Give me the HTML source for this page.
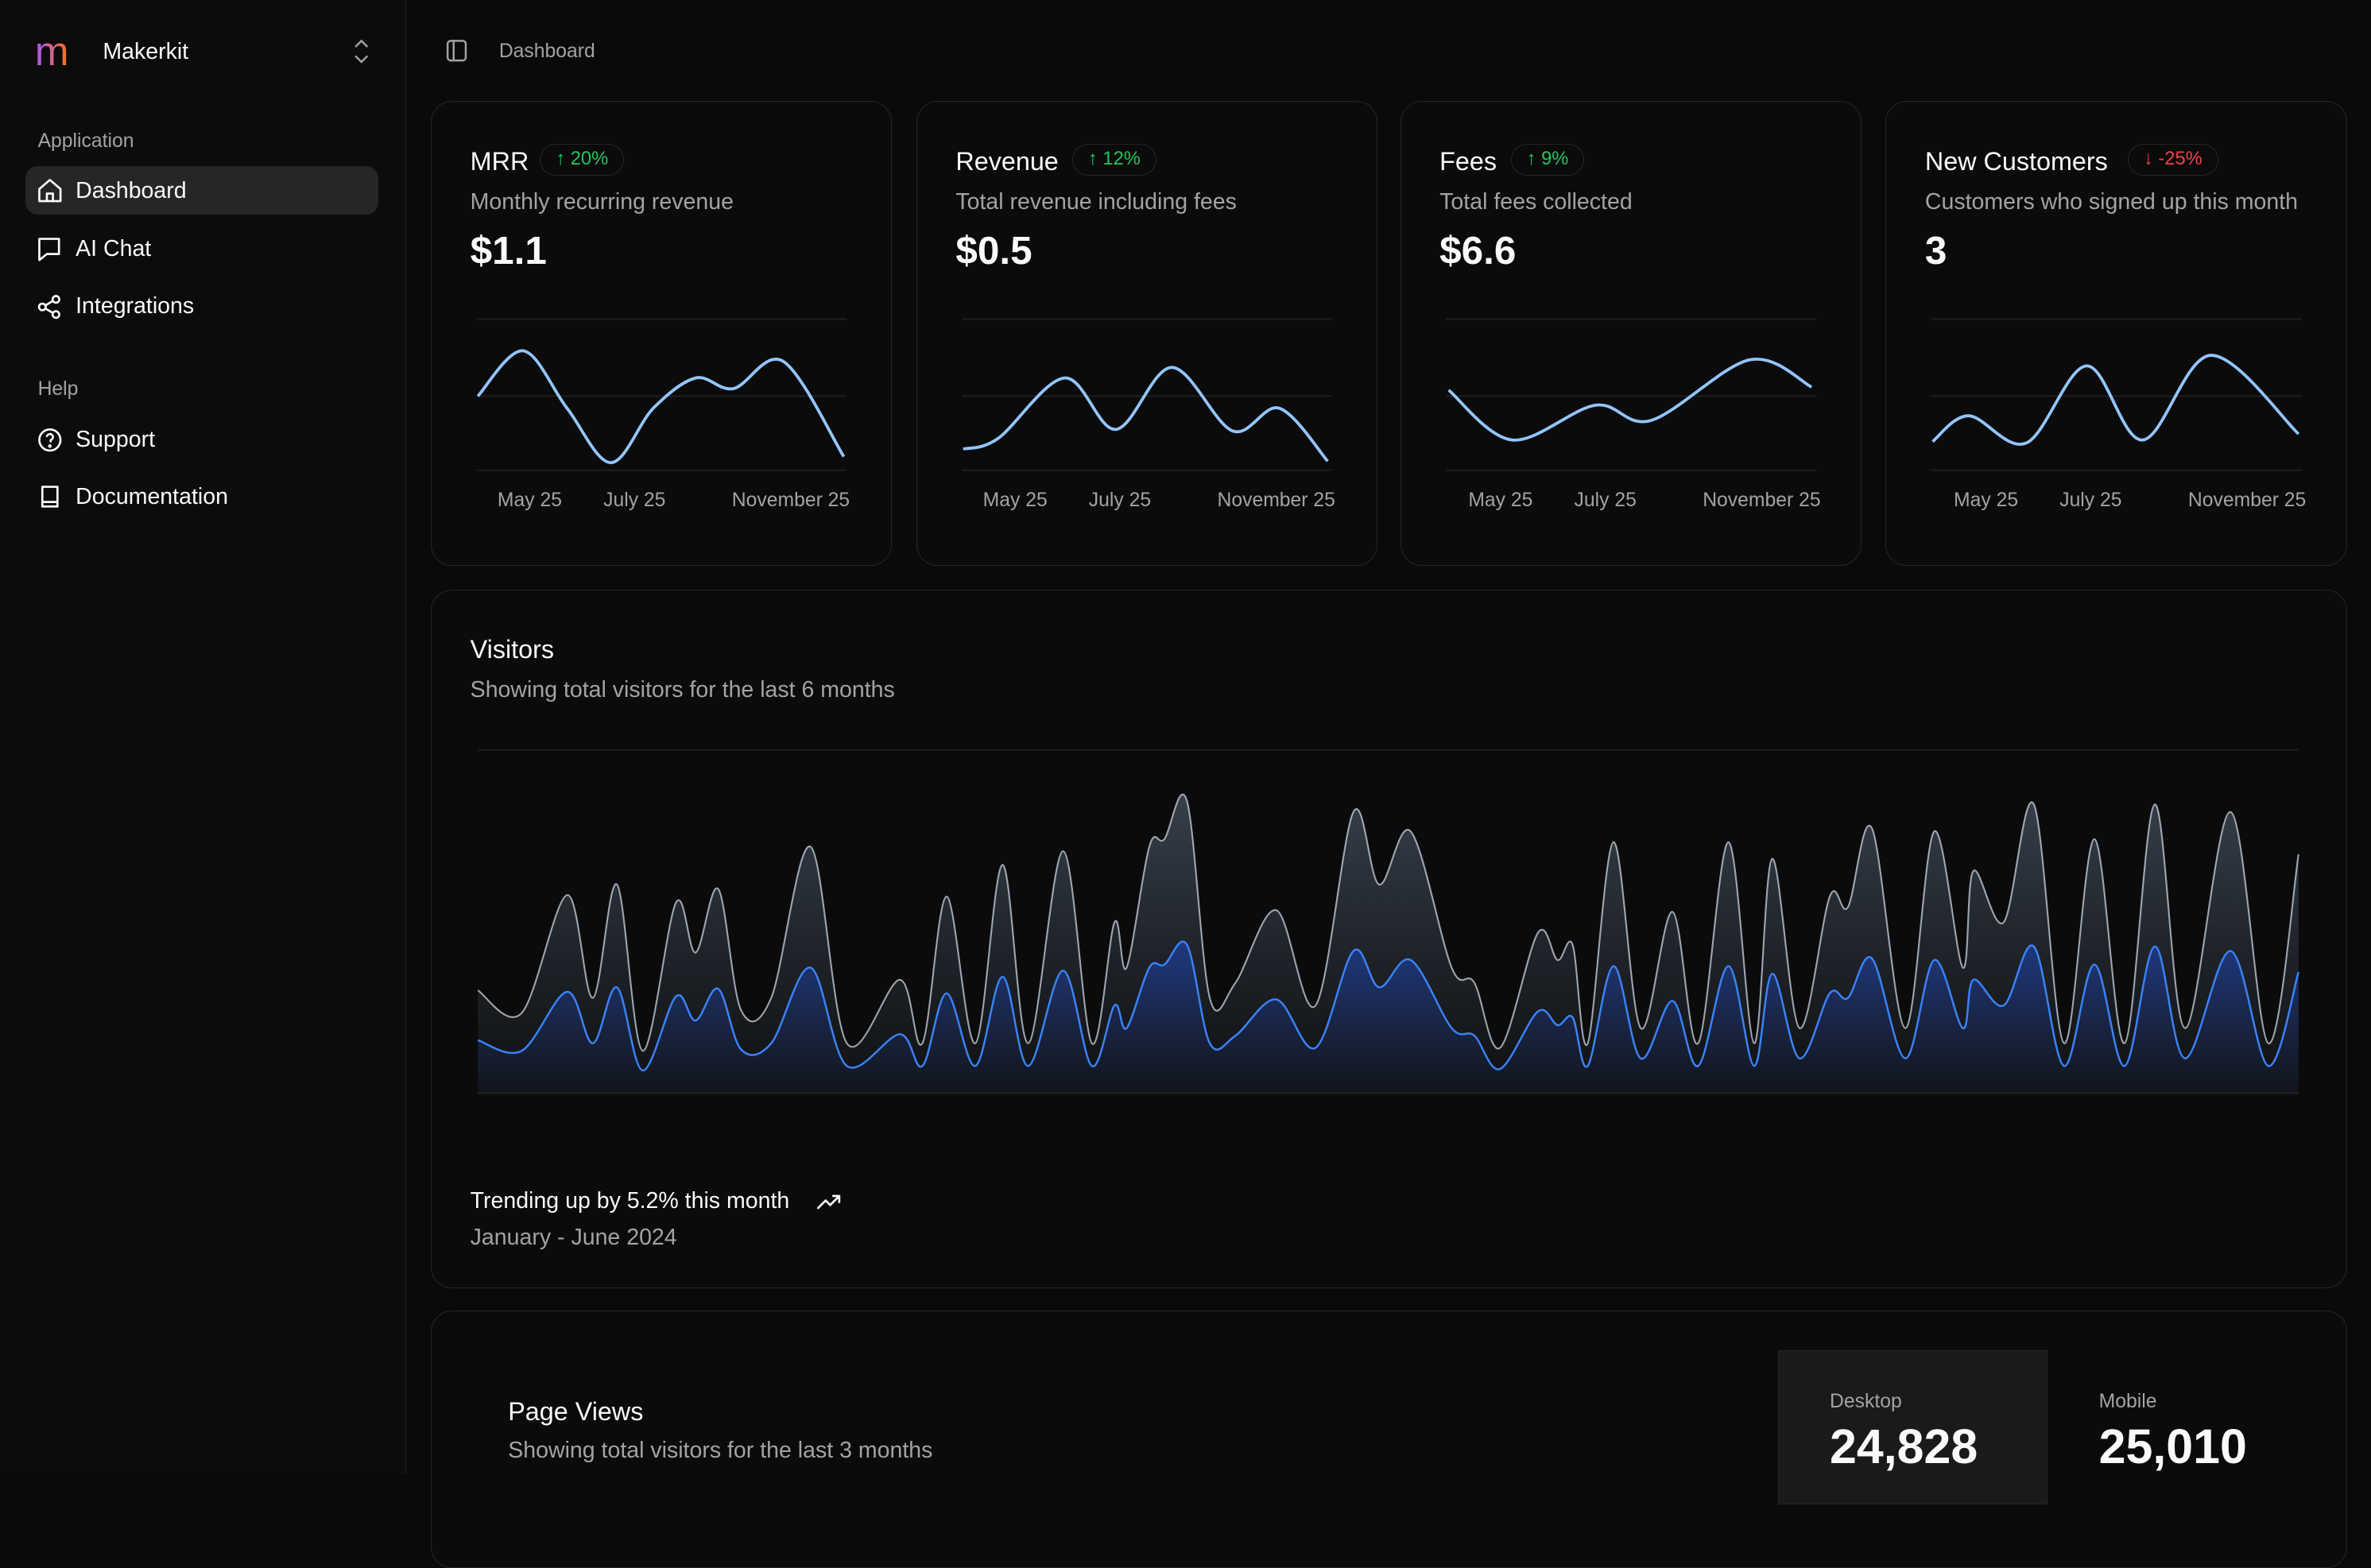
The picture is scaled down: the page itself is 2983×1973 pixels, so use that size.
<!DOCTYPE html>
<html><head><meta charset="utf-8">
<style>
html,body{margin:0;padding:0;background:#0a0a0a;width:2983px;height:1947px;overflow:hidden}
#r{position:absolute;left:0;top:0;width:1568px;height:1024px;zoom:1.9025;font-family:"Liberation Sans",sans-serif;color:#fafafa}
.a{position:absolute;white-space:nowrap}
.side{position:absolute;left:0;top:0;width:268px;height:975px;background:#0c0c0c;border-right:1px solid #222}
.card{position:absolute;border:1px solid #262626;border-radius:14px;background:#0b0b0b;box-sizing:border-box}
.t{font-size:17px;color:#fafafa}
.s{font-size:15px;color:#a3a3a3}
.v{font-size:26px;font-weight:bold}
.badge{position:absolute;height:21px;border:1px solid #262626;border-radius:11px;font-size:12.5px;line-height:19px;padding:0 10px;box-sizing:border-box}
.lab{font-size:13px;color:#a3a3a3}
.nav{font-size:15px;color:#fafafa}
svg{position:absolute;left:0;top:0;overflow:visible}
</style></head><body><div id="r">
<div class="side"></div>
<div class="a" style="left:23px;top:22px;font-size:27px;line-height:24px;background:linear-gradient(90deg,#a855f7,#f97316);-webkit-background-clip:text;color:transparent">m</div>
<div class="a" style="left:68px;top:26px;font-size:15px">Makerkit</div>
<div class="a lab" style="left:25px;top:86px">Application</div>
<div class="a" style="left:17px;top:110px;width:233px;height:32px;background:#262626;border-radius:8px"></div>
<div class="a nav" style="left:50px;top:118px">Dashboard</div>
<div class="a nav" style="left:50px;top:156px">AI Chat</div>
<div class="a nav" style="left:50px;top:194px">Integrations</div>
<div class="a lab" style="left:25px;top:250px">Help</div>
<div class="a nav" style="left:50px;top:282px">Support</div>
<div class="a nav" style="left:50px;top:320px">Documentation</div>
<div class="a lab" style="left:330px;top:27px">Dashboard</div>

<div class="card" style="left:285px;top:67px;width:305px;height:307px"></div>
<div class="card" style="left:606px;top:67px;width:305px;height:307px"></div>
<div class="card" style="left:926px;top:67px;width:305px;height:307px"></div>
<div class="card" style="left:1247px;top:67px;width:305px;height:307px"></div>
<div class="card" style="left:285px;top:390px;width:1267px;height:462px"></div>
<div class="card" style="left:285px;top:867px;width:1267px;height:170px"></div>

<div class="a t" style="left:311px;top:97px">MRR</div>
<div class="badge" style="left:357px;top:95px;color:#22c55e">↑ 20%</div>
<div class="a s" style="left:311px;top:125px">Monthly recurring revenue</div>
<div class="a v" style="left:311px;top:151px">$1.1</div>
<div class="a t" style="left:632px;top:97px">Revenue</div>
<div class="badge" style="left:709px;top:95px;color:#22c55e">↑ 12%</div>
<div class="a s" style="left:632px;top:125px">Total revenue including fees</div>
<div class="a v" style="left:632px;top:151px">$0.5</div>
<div class="a t" style="left:952px;top:97px">Fees</div>
<div class="badge" style="left:999px;top:95px;color:#22c55e">↑ 9%</div>
<div class="a s" style="left:952px;top:125px">Total fees collected</div>
<div class="a v" style="left:952px;top:151px">$6.6</div>
<div class="a t" style="left:1273px;top:97px">New Customers</div>
<div class="badge" style="left:1407px;top:95px;color:#ef4444">↓ -25%</div>
<div class="a s" style="left:1273px;top:125px">Customers who signed up this month</div>
<div class="a v" style="left:1273px;top:151px">3</div>

<div class="a lab" style="left:329px;top:324px">May 25</div><div class="a lab" style="left:399px;top:324px">July 25</div><div class="a lab" style="left:484px;top:324px">November 25</div>
<div class="a lab" style="left:650px;top:324px">May 25</div><div class="a lab" style="left:720px;top:324px">July 25</div><div class="a lab" style="left:805px;top:324px">November 25</div>
<div class="a lab" style="left:971px;top:324px">May 25</div><div class="a lab" style="left:1041px;top:324px">July 25</div><div class="a lab" style="left:1126px;top:324px">November 25</div>
<div class="a lab" style="left:1292px;top:324px">May 25</div><div class="a lab" style="left:1362px;top:324px">July 25</div><div class="a lab" style="left:1447px;top:324px">November 25</div>

<div class="a t" style="left:311px;top:420px">Visitors</div>
<div class="a s" style="left:311px;top:448px">Showing total visitors for the last 6 months</div>
<div class="a" style="left:311px;top:786px;font-size:15px">Trending up by 5.2% this month</div>
<div class="a s" style="left:311px;top:810px">January - June 2024</div>

<div class="a t" style="left:336px;top:924px">Page Views</div>
<div class="a s" style="left:336px;top:951px">Showing total visitors for the last 3 months</div>
<div class="a" style="left:1176px;top:893px;width:178px;height:102px;background:#1a1a1a;border:1px solid #262626;box-sizing:border-box"></div>
<div class="a lab" style="left:1210px;top:920px">Desktop</div>
<div class="a" style="left:1210px;top:938px;font-size:32px;font-weight:bold">24,828</div>
<div class="a lab" style="left:1388px;top:920px">Mobile</div>
<div class="a" style="left:1388px;top:938px;font-size:32px;font-weight:bold">25,010</div>

<svg width="1568" height="1024" id="sv">
<defs>
<linearGradient id="g1" x1="0" y1="0" x2="0" y2="1"><stop offset="0" stop-color="#64748b" stop-opacity=".5"/><stop offset="1" stop-color="#475569" stop-opacity=".08"/></linearGradient>
<linearGradient id="g2" x1="0" y1="0" x2="0" y2="1"><stop offset="0" stop-color="#1d4ed8" stop-opacity=".5"/><stop offset="1" stop-color="#1e3a8a" stop-opacity=".08"/></linearGradient>
</defs>
<g fill="none" stroke="#a1a1a1" stroke-width="1.3">
<rect x="296" y="27" width="12" height="13" rx="2"/><line x1="300" y1="27" x2="300" y2="40"/>
<path d="M235 31l4-4 4 4M235 37l4 4 4-4"/>
</g>
<path d="M541 799l5-5 3 3 6-6M551 791h4v4" fill="none" stroke="#fafafa" stroke-width="1.4" stroke-linecap="round" stroke-linejoin="round"/>
<g fill="none" stroke="#fafafa" stroke-width="1.4" stroke-linejoin="round">
<path d="M26 125l7-6 7 6v8h-14z M31 133v-5h4v5"/>
<path d="M26 158h13v10h-8l-5 4z"/>
<circle cx="28" cy="203" r="2.2"/><circle cx="37" cy="198" r="2.2"/><circle cx="37" cy="208" r="2.2"/><path d="M30 202l5-3M30 204l5 3"/>
<circle cx="33" cy="291" r="7"/><path d="M31 289a2 2 0 1 1 2.5 2v1.5"/><circle cx="33" cy="295" r=".5"/>
<path d="M28 322h10v13h-10zM28 332h10"/>
</g>
<g stroke="#1f1f1f" stroke-width="1" id="grid"></g>
<g id="ch"></g>
</svg>
</div>
<script>
function sm(p){var d="M"+p[0][0]+" "+p[0][1];for(var i=0;i<p.length-1;i++){var a=p[i-1]||p[i],b=p[i],c=p[i+1],e=p[i+2]||c;d+=" C"+(b[0]+(c[0]-a[0])/6).toFixed(1)+" "+(b[1]+(c[1]-a[1])/6).toFixed(1)+" "+(c[0]-(e[0]-b[0])/6).toFixed(1)+" "+(c[1]-(e[1]-b[1])/6).toFixed(1)+" "+c[0]+" "+c[1];}return d;}
var h="",g="";
var cards=[[285,[[31,262],[61,232],[90,270],[119,306],[147,270],[175,250],[200,257],[233,239],[273,302]]],
[606,[[31,297],[54,290],[98,250],[132,284],[169,243],[209,285],[240,270],[272,305]]],
[926,[[32,258],[74,291],[129,268],[166,278],[231,238],[272,256]]],
[1247,[[31,292],[55,275],[93,293],[133,242],[170,291],[215,235],[273,287]]]];
cards.forEach(function(c){var x=c[0];[211,262,311].forEach(function(y){g+='<line x1="'+(x+30)+'" x2="'+(x+275)+'" y1="'+y+'" y2="'+y+'"/>';});
h+='<path d="'+sm(c[1].map(function(p){return[p[0]+x,p[1]]}))+'" fill="none" stroke="#93c5fd" stroke-width="2"/>';});
[496,723].forEach(function(y){g+='<line x1="316" x2="1520" y1="'+y+'" y2="'+y+'"/>';});
var U=[[316,655],[345,670],[375,592],[392,660],[408,585],[425,695],[447,597],[460,630],[475,588],[490,668],[510,660],[536,560],[560,690],[595,648],[610,690],[626,593],[645,690],[663,572],[680,690],[703,563],[722,690],[737,610],[745,640],[760,560],[770,555],[785,530],[800,660],[817,650],[844,602],[870,665],[895,537],[912,585],[933,550],[960,640],[975,650],[992,693],[1017,617],[1030,635],[1040,625],[1050,690],[1067,557],[1085,680],[1106,603],[1123,690],[1143,557],[1160,690],[1172,568],[1190,680],[1210,593],[1222,600],[1238,548],[1260,680],[1279,550],[1298,640],[1305,576],[1325,610],[1345,532],[1365,690],[1385,555],[1405,690],[1425,532],[1445,680],[1475,537],[1500,690],[1520,565]];
var L=U.map(function(p){return[p[0],Math.round(625+(p[1]-530)*0.5)]});
var du=sm(U),dl=sm(L);
h+='<path d="'+du+' L1520 723 L316 723Z" fill="url(#g1)"/><path d="'+dl+' L1520 723 L316 723Z" fill="url(#g2)"/>';
h+='<path d="'+du+'" fill="none" stroke="#cbd5e1" stroke-width="1.1" stroke-opacity=".75"/><path d="'+dl+'" fill="none" stroke="#3b82f6" stroke-width="1.3"/>';
document.getElementById("grid").innerHTML=g;document.getElementById("ch").innerHTML=h;
</script>
</body></html>
